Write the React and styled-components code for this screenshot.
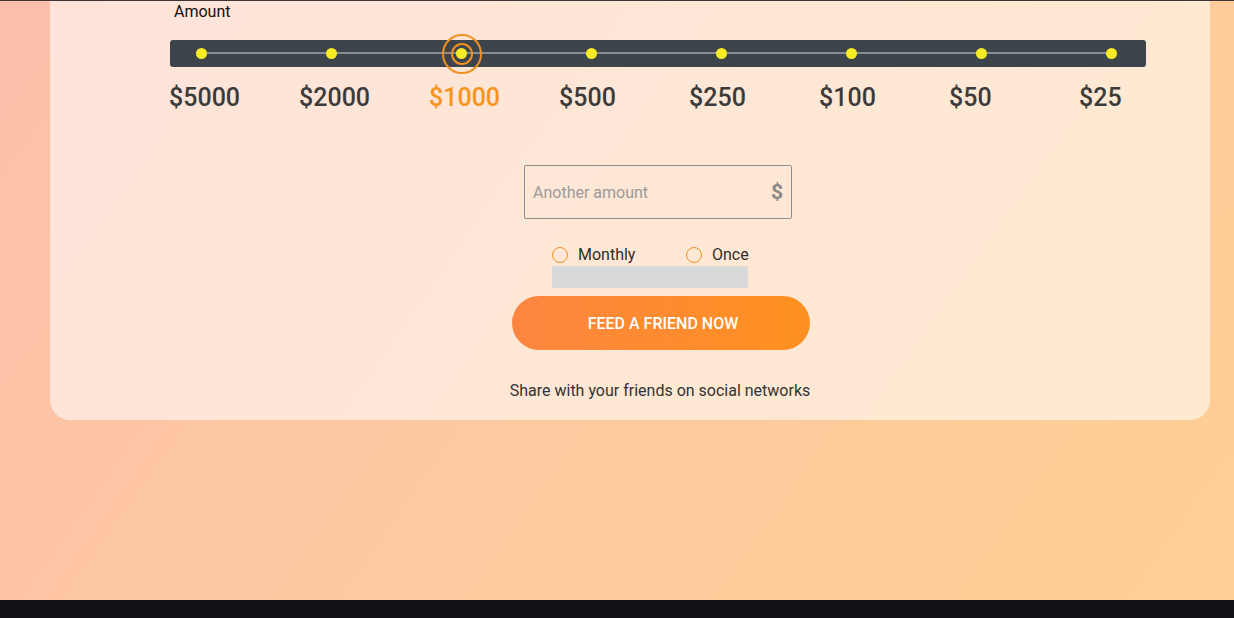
import React, { useState } from 'react'
import styled, { createGlobalStyle } from 'styled-components'

const GlobalStyle = createGlobalStyle`
  html, body {
    margin: 0;
    padding: 0;
  }
  body {
    font-family: Roboto, "Liberation Sans", sans-serif;
    background: linear-gradient(125deg, #fcbfab 0%, #fdc9a0 45%, #ffcf94 100%);
    min-height: 100vh;
  }
`

const AMOUNTS = [5000, 2000, 1000, 500, 250, 100, 50, 25]

const Page = styled.div`
  display: flex;
  flex-direction: column;
  align-items: flex-start;
  min-height: 100vh;
`

const TopRule = styled.div`
  align-self: stretch;
  height: 1px;
  background: #3f3433;
`

const Card = styled.section`
  width: 1160px;
  box-sizing: border-box;
  margin: 0 0 180px 50px;
  padding: 0 0 19px 120px;
  background: rgba(255, 255, 255, 0.56);
  border-radius: 0 0 20px 20px;
`

const Column = styled.div`
  width: 976px;
  display: flex;
  flex-direction: column;
  align-items: center;
`

const Label = styled.div`
  align-self: flex-start;
  margin-top: 1px;
  padding-left: 4px;
  font-size: 16px;
  line-height: 20px;
  color: #111;
`

const Track = styled.div`
  position: relative;
  margin-top: 18px;
  width: 976px;
  height: 27px;
  background: #3d444b;
  border-radius: 3px;
  display: grid;
  grid-template-columns: repeat(8, 130px);
  align-items: center;

  &::before {
    content: '';
    position: absolute;
    left: 31px;
    right: 35px;
    top: 12px;
    height: 2px;
    background: #878d94;
  }
`

const Stop = styled.button`
  position: relative;
  margin-left: 26px;
  width: 11px;
  height: 11px;
  padding: 0;
  border: none;
  border-radius: 50%;
  background: #f8ec24;
  cursor: pointer;

  &::before,
  &::after {
    content: '';
    position: absolute;
    left: 50%;
    top: 50%;
    border-radius: 50%;
    border: 2px solid #f0901f;
    transform: translate(-50%, -50%);
    display: ${p => (p.$active ? 'block' : 'none')};
  }
  &::before {
    width: 18px;
    height: 18px;
  }
  &::after {
    width: 36px;
    height: 36px;
  }
`

const Prices = styled.div`
  margin-top: 16px;
  margin-left: -1px;
  align-self: flex-start;
  display: grid;
  grid-template-columns: repeat(8, 130px);
`

const Price = styled.span`
  font-size: 25px;
  line-height: 30px;
  font-weight: 500;
  color: ${p => (p.$active ? '#f7941d' : '#3b3b3b')};
  cursor: pointer;
`

const AmountField = styled.label`
  margin-top: 52px;
  width: 268px;
  height: 54px;
  box-sizing: border-box;
  border: 1px solid #8e8e8e;
  border-radius: 2px;
  display: flex;
  align-items: center;
  padding: 0 8px 0 8px;
`

const AmountInput = styled.input`
  flex: 1;
  min-width: 0;
  border: none;
  background: transparent;
  outline: none;
  font-family: Roboto, "Liberation Sans", sans-serif;
  font-size: 16px;
  color: #333;
  padding: 0;

  &::placeholder {
    color: #9a9a9a;
  }
`

const Currency = styled.span`
  font-size: 21px;
  font-weight: 700;
  color: #8a8a8a;
`

const Frequency = styled.div`
  align-self: flex-start;
  margin-left: 382px;
  margin-top: 26px;
  width: 196px;
  display: flex;
  flex-direction: column;
`

const RadioRow = styled.div`
  display: grid;
  grid-template-columns: 134px auto;
`

const RadioOption = styled.label`
  display: flex;
  align-items: center;
  gap: 10px;
  font-size: 16px;
  line-height: 20px;
  color: #2e2e2e;
  cursor: pointer;
`

const RadioCircle = styled.span`
  width: 16px;
  height: 16px;
  box-sizing: border-box;
  border: 1px solid #f0901f;
  border-radius: 50%;
  background: ${p => (p.$checked ? 'radial-gradient(circle, #f0901f 0 4px, transparent 5px)' : 'transparent')};
`

const Notice = styled.div`
  margin-top: 1px;
  height: 22px;
  background: #d9d9d9;
`

const FeedButton = styled.button`
  margin-top: 8px;
  margin-left: 6px;
  width: 298px;
  height: 54px;
  border: none;
  border-radius: 27px;
  background: linear-gradient(90deg, #fe8540, #fe9120);
  color: #fff;
  font-family: Roboto, "Liberation Sans", sans-serif;
  font-size: 16px;
  font-weight: 500;
  padding: 0 0 0 4px;
  cursor: pointer;
`

const Share = styled.p`
  margin: 31px 0 0 4px;
  font-size: 16px;
  line-height: 20px;
  color: #333;
`

const Footer = styled.footer`
  align-self: stretch;
  height: 60px;
  background: #111014;
`

export default function App() {
  const [selected, setSelected] = useState(1000)
  const [freq, setFreq] = useState(null)

  return (
    <Page>
      <GlobalStyle />
      <TopRule />
      <Card>
        <Column>
          <Label>Amount</Label>
          <Track>
            {AMOUNTS.map(a => (
              <Stop key={a} $active={a === selected} onClick={() => setSelected(a)} aria-label={`$${a}`} />
            ))}
          </Track>
          <Prices>
            {AMOUNTS.map(a => (
              <Price key={a} $active={a === selected} onClick={() => setSelected(a)}>
                ${a}
              </Price>
            ))}
          </Prices>
          <AmountField>
            <AmountInput placeholder="Another amount" />
            <Currency>$</Currency>
          </AmountField>
          <Frequency>
            <RadioRow>
              <RadioOption onClick={() => setFreq('monthly')}>
                <RadioCircle $checked={freq === 'monthly'} />
                Monthly
              </RadioOption>
              <RadioOption onClick={() => setFreq('once')}>
                <RadioCircle $checked={freq === 'once'} />
                Once
              </RadioOption>
            </RadioRow>
            <Notice />
          </Frequency>
          <FeedButton>FEED A FRIEND NOW</FeedButton>
          <Share>Share with your friends on social networks</Share>
        </Column>
      </Card>
      <Footer />
    </Page>
  )
}
